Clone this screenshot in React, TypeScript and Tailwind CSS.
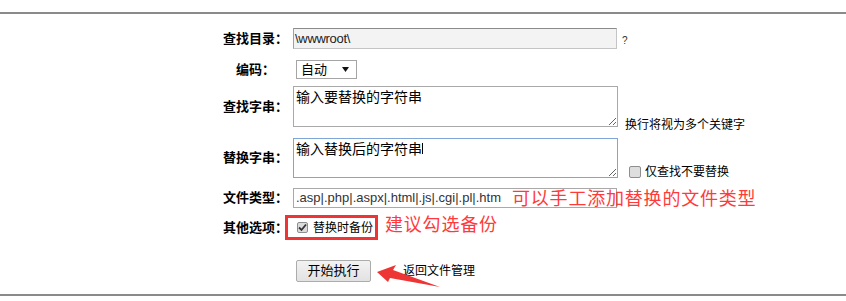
import React from "react";

const Label = ({ children }: { children: React.ReactNode }) => (
  <div className="w-[75px] shrink-0 text-center font-bold text-[13px] leading-[16px] text-black">{children}</div>
);

export default function App() {
  return (
    <div className="relative w-[846px] h-[301px] overflow-hidden bg-white text-black font-['Liberation_Sans','Noto_Sans_CJK_SC',sans-serif]">
      <div className="h-3" />
      <div className="h-[2px] bg-[#8a8a8a]" />

      <div className="pl-[218px]">
        {/* Row 1 */}
        <div className="mt-[14px] h-[21px] flex items-center">
          <Label>查找目录：</Label>
          <div className="w-[324px] h-[21px] bg-[#f3f3f3] border border-[#c4c4c4] border-t-[#8c8c8c] border-l-[#a0a0a0] text-[13px] leading-[19px] pl-[1px] text-[#222] tracking-[-0.3px]">
            {"\\wwwroot\\"}
          </div>
          <span className="ml-[5px] mt-[4px] text-[10px] leading-[12px] text-[#333]">?</span>
        </div>

        {/* Row 2 */}
        <div className="mt-[11px] h-[19px] flex items-center">
          <Label>编码：</Label>
          <div className="ml-[3px] w-[61px] h-[19px] border border-[#a5a5a5] bg-white flex items-center pl-[4px] pr-[7px] text-[13px] leading-[17px]">
            <span>自动</span>
            <svg className="ml-auto" width="7" height="5" viewBox="0 0 7 5">
              <polygon points="0,0 7,0 3.5,5" fill="#111" />
            </svg>
          </div>
        </div>

        {/* Row 3 */}
        <div className="mt-[7px] h-[41px] flex">
          <div className="self-center"><Label>查找字串：</Label></div>
          <textarea
            readOnly
            defaultValue="输入要替换的字符串"
            className="w-[325px] h-[41px] border border-[#a9a9a9] bg-white text-[14px] leading-[18px] px-[2px] py-[1px] outline-none text-black"
          />
          <span className="self-end mb-[-6px] ml-[7px] text-[12px] leading-[16px]">换行将视为多个关键字</span>
        </div>

        {/* Row 4 */}
        <div className="mt-[11px] h-[40px] flex">
          <div className="self-center"><Label>替换字串：</Label></div>
          <div className="relative">
            <textarea
              readOnly
              defaultValue="输入替换后的字符串"
              className="w-[325px] h-[40px] border border-[#7fa6d6] bg-white text-[14px] leading-[18px] px-[2px] py-[1px] outline-none text-black"
            />
            <div className="absolute left-[129px] top-[5px] w-px h-[11px] bg-black" />
          </div>
          <div className="self-end mb-[-2px] ml-[11px] flex items-center">
            <span className="w-[12px] h-[12px] rounded-[2px] border border-[#8e8e8e] bg-[#dedede]" />
            <span className="ml-[4px] text-[12px] leading-[16px]">仅查找不要替换</span>
          </div>
        </div>

        {/* Row 5 */}
        <div className="mt-[10px] h-[20px] flex items-center">
          <Label>文件类型：</Label>
          <div className="w-[324px] h-[20px] border border-[#a9a9a9] bg-white text-[13px] leading-[18px] pl-[2px] text-[#333]">
            .asp|.php|.aspx|.html|.js|.cgi|.pl|.htm
          </div>
        </div>

        {/* Row 6 */}
        <div className="mt-[7px] h-[25px] flex items-center">
          <Label>其他选项：</Label>
          <span className="ml-[4px] w-[11px] h-[11px] rounded-[2px] border border-[#8e8e8e] bg-[#dcdcdc] flex items-center justify-center">
            <svg width="9" height="9" viewBox="0 0 9 9">
              <path d="M1 4.5 L3.5 7 L8 1.5" stroke="#333" strokeWidth="1.8" fill="none" />
            </svg>
          </span>
          <span className="ml-[5px] text-[12px] leading-[16px]">替换时备份</span>
        </div>

        {/* Row 7 */}
        <div className="mt-[20px] h-[22px] flex items-center">
          <div className="w-[75px] shrink-0" />
          <div className="ml-[3px] w-[75px] h-[22px] rounded-[2px] border border-[#acacac] bg-gradient-to-b from-[#f2f2f2] to-[#e2e2e2] flex items-center justify-center text-[13px] leading-[16px]">
            开始执行
          </div>
          <span className="ml-[32px] text-[12px] leading-[16px]">返回文件管理</span>
        </div>
      </div>

      <div className="mt-[12px] h-[2px] bg-[#8a8a8a]" />

      {/* Annotations */}
      <div className="absolute left-[512px] top-[188px] text-[18px] leading-[22px] tracking-[0.8px] text-[#ff3a3a] whitespace-nowrap">
        可以手工添加替换的文件类型
      </div>
      <div className="absolute left-[385px] top-[214px] text-[18px] leading-[22px] tracking-[0.8px] text-[#ff3a3a] whitespace-nowrap">
        建议勾选备份
      </div>
      <div className="absolute left-[285px] top-[215px] w-[93px] h-[25px] border-[3px] border-[#ee3535]" />
      <svg className="absolute left-0 top-0" width="846" height="301" viewBox="0 0 846 301">
        <polygon points="377,272 396,265 393,270 440,287 390,278 388,282" fill="#ee3535" />
      </svg>
    </div>
  );
}
